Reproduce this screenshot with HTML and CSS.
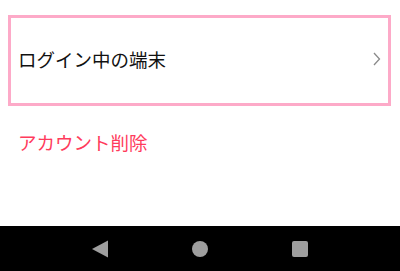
FILE: index.html
```html
<!DOCTYPE html>
<html lang="ja">
<head>
    <meta charset="UTF-8">
    <meta name="viewport" content="width=device-width, initial-scale=1.0">
    <title>アカウント設定</title>
    <link rel="stylesheet" href="styles.css">
</head>
<body>

    <div class="screen">
        <div class="content">
            <a href="#" class="menu-row">
                <span class="menu-label">ログイン中の端末</span>
                <svg class="chevron" width="8" height="14" viewBox="0 0 8 14">
                    <path d="M1 1 L6.5 7 L1 13" fill="none" stroke="#8a8a8a" stroke-width="1.3"/>
                </svg>
            </a>

            <a href="#" class="delete-link">アカウント削除</a>
        </div>

        <div class="nav-bar">
            <svg class="nav-icon" width="18" height="18" viewBox="0 0 18 18">
                <path d="M1 9 L17 0.5 L17 17.5 Z" fill="#9e9e9e"/>
            </svg>
            <svg class="nav-icon" width="18" height="18" viewBox="0 0 18 18">
                <circle cx="9" cy="9" r="8" fill="#9e9e9e"/>
            </svg>
            <svg class="nav-icon" width="18" height="18" viewBox="0 0 18 18">
                <rect x="1" y="1" width="16" height="16" rx="2" fill="#9e9e9e"/>
            </svg>
        </div>
    </div>

</body>
</html>
```

FILE: styles.css
```css
/* Global Styles */
body {
    margin: 0;
    padding: 0;
    background: #ffffff;
    font-family: "Noto Sans CJK JP", "Noto Sans", sans-serif;
}

.screen {
    width: 400px;
    height: 271px;
    display: flex;
    flex-direction: column;
}

.content {
    flex: 1;
    padding: 15px 9px 0 8px;
}

.menu-row {
    display: flex;
    align-items: center;
    justify-content: space-between;
    height: 81px;
    padding: 0 7px 4px 7px;
    border: 3px solid #fdaac8;
    color: #111111;
    text-decoration: none;
}

.menu-label {
    font-size: 18.5px;
}

.delete-link {
    display: block;
    margin-top: 23px;
    padding-left: 10px;
    font-size: 18.5px;
    line-height: 26px;
    color: #ff3b5c;
    text-decoration: none;
}

.nav-bar {
    height: 45px;
    background: #000000;
    display: flex;
    align-items: center;
    justify-content: center;
    gap: 82px;
}
```
